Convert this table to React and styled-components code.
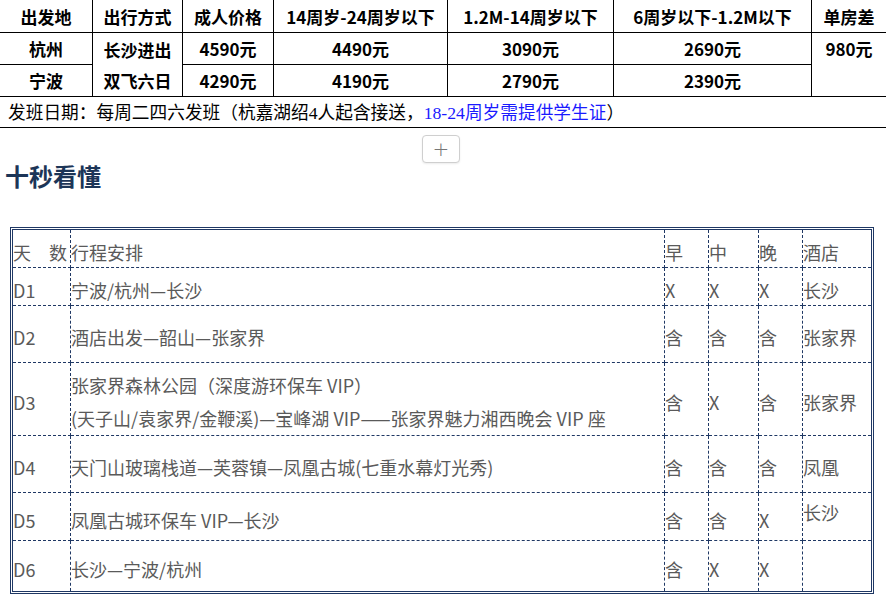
import React from "react";
import styled, { createGlobalStyle } from "styled-components";

const GlobalStyle = createGlobalStyle`
  body {
    margin: 0;
    background: #fff;
    font-family: "Noto Sans CJK SC", "Noto Sans", sans-serif;
    overflow: hidden;
  }
`;

const Page = styled.div`
  width: 886px;
  height: 600px;
  overflow: hidden;
`;

//price table
const PriceTable = styled.table`
  margin: -1px 0 0 -1px;
  width: 887px;
  border-collapse: collapse;
  table-layout: fixed;
  color: #000;
`;

const PriceRow = styled.tr`
  height: ${(p) => p.h}px;
`;

const PriceCell = styled.td`
  border: 1px solid #000;
  padding: 0;
  text-align: center;
  vertical-align: ${(p) => (p.top ? "top" : "middle")};
  padding-top: 0;
  font-family: "Noto Sans CJK SC", sans-serif;
  font-weight: 700;
  font-size: 17px;
  line-height: 31px;
  white-space: nowrap;
`;

const StackLine = styled.div`
  line-height: 31px;
`;

const NoteCell = styled.td`
  border: 1px solid #000;
  padding: 0 0 2px 8px;
  text-align: left;
  font-family: "Liberation Serif", "Noto Sans CJK SC", serif;
  font-size: 17.7px;
  white-space: nowrap;
`;

const Blue = styled.span`
  color: #1a1aff;
`;

//expand button
const ButtonBar = styled.div`
  display: flex;
  justify-content: center;
  padding: 7px 4px 0 0;
`;

const PlusButton = styled.button`
  width: 38px;
  height: 28px;
  border: 1px solid #cfcfcf;
  border-radius: 4px;
  background: #fff;
  color: #777;
  font-size: 20px;
  font-weight: 300;
  line-height: 1;
  padding: 0;
  box-shadow: 0 1px 2px rgba(0, 0, 0, 0.08);
  font-family: "DejaVu Sans", sans-serif;
`;

const Heading = styled.h2`
  margin: 0 0 0 5px;
  font-size: 24px;
  line-height: 26px;
  font-weight: 700;
  color: #1c3557;
  font-family: "Noto Sans CJK SC", sans-serif;
`;

//itinerary table
const TripTable = styled.table`
  margin: 38px 0 0 10px;
  width: 864px;
  border: 3px double #1f3864;
  border-collapse: separate;
  border-spacing: 0;
  table-layout: fixed;
  color: #5a5a5a;
  font-size: 18px;
  font-family: "Noto Sans CJK SC", sans-serif;
`;

const TripRow = styled.tr`
  height: ${(p) => p.h}px;
`;

const TripCell = styled.td`
  padding: ${(p) => (p.raise ? "0 0 10px" : "6px 0 0")};
  border-right: ${(p) => (p.last ? "none" : "1px dashed #1f3864")};
  border-bottom: ${(p) => (p.end ? "none" : "1px dashed #1f3864")};
  text-align: left;
  vertical-align: middle;
  line-height: 24px;
  white-space: nowrap;
  overflow: visible;
`;

const TripLine = styled.div`
  line-height: 33px;
`;

const priceRows = [
  ["杭州", "4590元", "4490元", "3090元", "2690元"],
  ["宁波", "4290元", "4190元", "2790元", "2390元"],
];

const days = [
  { d: "D1", plan: ["宁波/杭州—长沙"], meals: ["X", "X", "X"], hotel: "长沙", h: 38 },
  { d: "D2", plan: ["酒店出发—韶山—张家界"], meals: ["含", "含", "含"], hotel: "张家界", h: 57 },
  {
    d: "D3",
    plan: [
      "张家界森林公园（深度游环保车 VIP）",
      "(天子山/袁家界/金鞭溪)—宝峰湖 VIP——张家界魅力湘西晚会 VIP 座",
    ],
    meals: ["含", "X", "含"],
    hotel: "张家界",
    h: 72,
  },
  { d: "D4", plan: ["天门山玻璃栈道—芙蓉镇—凤凰古城(七重水幕灯光秀)"], meals: ["含", "含", "含"], hotel: "凤凰", h: 57 },
  { d: "D5", plan: ["凤凰古城环保车 VIP—长沙"], meals: ["含", "含", "X"], hotel: "长沙", h: 48, raiseHotel: true },
  { d: "D6", plan: ["长沙—宁波/杭州"], meals: ["含", "X", "X"], hotel: "", h: 50 },
];

export default function App() {
  return (
    <Page>
      <GlobalStyle />
      <PriceTable>
        <colgroup>
          <col style={{ width: 93 }} />
          <col style={{ width: 90 }} />
          <col style={{ width: 91 }} />
          <col style={{ width: 174 }} />
          <col style={{ width: 166 }} />
          <col style={{ width: 198 }} />
          <col style={{ width: 75 }} />
        </colgroup>
        <tbody>
          <PriceRow h={33}>
            <PriceCell>出发地</PriceCell>
            <PriceCell>出行方式</PriceCell>
            <PriceCell>成人价格</PriceCell>
            <PriceCell>14周岁-24周岁以下</PriceCell>
            <PriceCell>1.2M-14周岁以下</PriceCell>
            <PriceCell>6周岁以下-1.2M以下</PriceCell>
            <PriceCell>单房差</PriceCell>
          </PriceRow>
          <PriceRow h={31}>
            <PriceCell>{priceRows[0][0]}</PriceCell>
            <PriceCell rowSpan={2}>
              <StackLine>长沙进出</StackLine>
              <StackLine>双飞六日</StackLine>
            </PriceCell>
            {priceRows[0].slice(1).map((v, i) => (
              <PriceCell key={i}>{v}</PriceCell>
            ))}
            <PriceCell rowSpan={2} top>
              980元
            </PriceCell>
          </PriceRow>
          <PriceRow h={31}>
            {priceRows[1].map((v, i) => (
              <PriceCell key={i}>{v}</PriceCell>
            ))}
          </PriceRow>
          <PriceRow h={31}>
            <NoteCell colSpan={7}>
              发班日期：每周二四六发班（杭嘉湖绍4人起含接送，
              <Blue>18-24周岁需提供学生证</Blue>）
            </NoteCell>
          </PriceRow>
        </tbody>
      </PriceTable>

      <ButtonBar>
        <PlusButton>+</PlusButton>
      </ButtonBar>
      <Heading>十秒看懂</Heading>

      <TripTable>
        <colgroup>
          <col style={{ width: 58 }} />
          <col style={{ width: 594 }} />
          <col style={{ width: 44 }} />
          <col style={{ width: 50 }} />
          <col style={{ width: 44 }} />
          <col style={{ width: 68 }} />
        </colgroup>
        <tbody>
          <TripRow h={38}>
            <TripCell>天　数</TripCell>
            <TripCell>行程安排</TripCell>
            <TripCell>早</TripCell>
            <TripCell>中</TripCell>
            <TripCell>晚</TripCell>
            <TripCell last>酒店</TripCell>
          </TripRow>
          {days.map((row, i) => {
            const end = i === days.length - 1;
            return (
              <TripRow key={row.d} h={row.h}>
                <TripCell end={end}>{row.d}</TripCell>
                <TripCell end={end}>
                  {row.plan.length > 1
                    ? row.plan.map((line) => <TripLine key={line}>{line}</TripLine>)
                    : row.plan[0]}
                </TripCell>
                {row.meals.map((m, j) => (
                  <TripCell key={j} end={end}>
                    {m}
                  </TripCell>
                ))}
                <TripCell last end={end} raise={row.raiseHotel}>
                  {row.hotel}
                </TripCell>
              </TripRow>
            );
          })}
        </tbody>
      </TripTable>
    </Page>
  );
}
